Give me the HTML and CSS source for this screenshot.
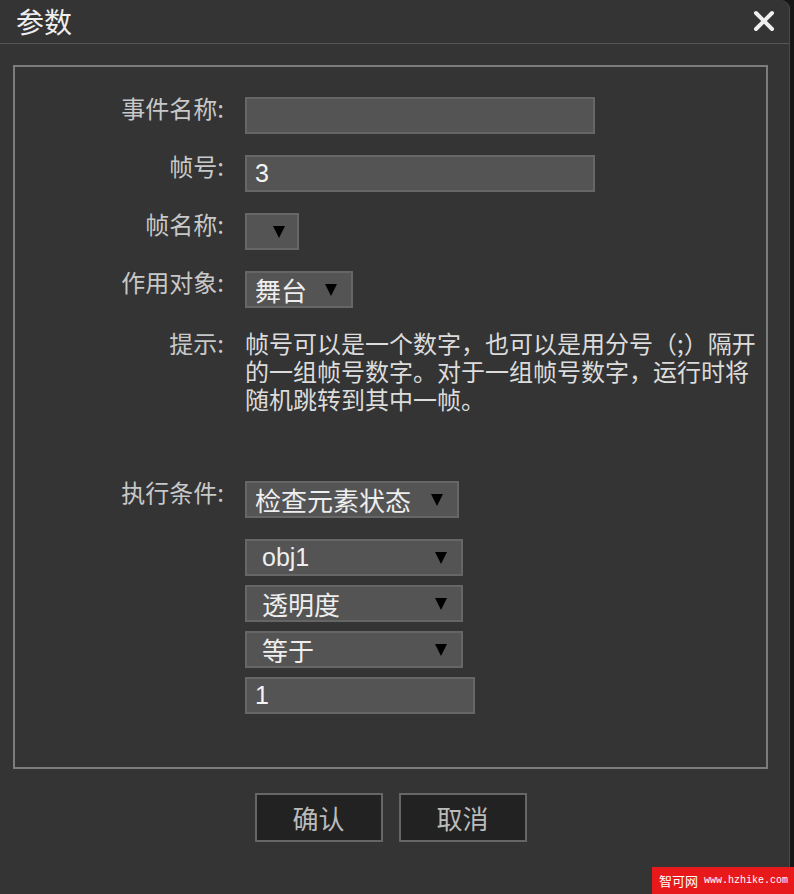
FILE: index.html
```html
<!DOCTYPE html>
<html lang="zh-CN">
<head>
    <meta charset="UTF-8">
    <meta name="viewport" content="width=device-width, initial-scale=1.0">
    <title>参数</title>
    <link rel="stylesheet" href="styles.css">
</head>
<body>
    <div class="dialog">
        <div class="dialog-header">
            <span class="dialog-title">参数</span>
            <span class="dialog-close">
                <svg width="24" height="24" viewBox="0 0 24 24">
                    <path d="M4 4L20 20M20 4L4 20" stroke="#eee" stroke-width="4" stroke-linecap="round"/>
                </svg>
            </span>
        </div>

        <div class="panel">
            <div class="form-row">
                <label class="form-label">事件名称:</label>
                <div class="box text-input wide"></div>
            </div>

            <div class="form-row">
                <label class="form-label">帧号:</label>
                <div class="box text-input wide">3</div>
            </div>

            <div class="form-row">
                <label class="form-label">帧名称:</label>
                <div class="box select select-empty"><span class="arrow"></span></div>
            </div>

            <div class="form-row">
                <label class="form-label">作用对象:</label>
                <div class="box select select-target"><span class="select-text">舞台</span><span class="arrow"></span></div>
            </div>

            <div class="form-row">
                <label class="form-label tip-label">提示:</label>
                <p class="tip">帧号可以是一个数字，也可以是用分号（;）隔开的一组帧号数字。对于一组帧号数字，运行时将随机跳转到其中一帧。</p>
            </div>

            <div class="form-row condition-row">
                <label class="form-label">执行条件:</label>
                <div class="box select select-condition"><span class="select-text">检查元素状态</span><span class="arrow"></span></div>
            </div>

            <div class="form-row">
                <span class="form-label"></span>
                <div class="condition-stack">
                    <div class="box select select-sub"><span class="select-text latin">obj1</span><span class="arrow"></span></div>
                    <div class="box select select-sub"><span class="select-text">透明度</span><span class="arrow"></span></div>
                    <div class="box select select-sub"><span class="select-text">等于</span><span class="arrow"></span></div>
                    <div class="box text-input value-input">1</div>
                </div>
            </div>
        </div>

        <div class="dialog-buttons">
            <button class="btn">确认</button>
            <button class="btn">取消</button>
        </div>
    </div>

    <div class="watermark">
        <span class="watermark-name">智可网</span>
        <span class="watermark-url">www.hzhike.com</span>
    </div>
</body>
</html>
```

FILE: styles.css
```css
* {
    margin: 0;
    padding: 0;
    box-sizing: border-box;
}

body {
    font-family: "Noto Sans CJK SC", "Liberation Sans", sans-serif;
    background: #161616;
    width: 794px;
    height: 894px;
    overflow: hidden;
    position: relative;
}

.dialog {
    width: 790px;
    height: 894px;
    background: #343434;
    border-top-right-radius: 9px;
    border-right: 1px solid #4a4a4a;
}

.dialog-header {
    height: 44px;
    border-bottom: 1px solid #555;
    display: flex;
    align-items: center;
    justify-content: space-between;
    padding: 0 13px 0 16px;
}

.dialog-title {
    font-size: 28px;
    line-height: 43px;
    color: #eee;
}

.dialog-close {
    display: flex;
    width: 24px;
    height: 24px;
    margin-top: -2px;
}

.panel {
    margin: 21px 21px 0 13px;
    height: 704px;
    border: 2px solid #7c7c7c;
    padding-top: 30px;
    display: flex;
    flex-direction: column;
    gap: 21px;
}

.form-row {
    display: flex;
    align-items: flex-start;
    gap: 21px;
}

.form-label {
    flex: 0 0 209px;
    text-align: right;
    font-size: 24px;
    line-height: 22px;
    color: #c8c8c8;
}

.tip-label {
    line-height: 28px;
}

.tip {
    width: 522px;
    font-size: 24px;
    line-height: 28px;
    color: #dcdcdc;
}

.condition-row {
    margin-top: 47px;
}

.condition-stack {
    display: flex;
    flex-direction: column;
    gap: 9px;
}

.box {
    height: 37px;
    border: 2px solid #666;
    background: #545454;
    display: flex;
    align-items: center;
}

.text-input {
    padding: 0 8px;
    font-family: "Liberation Sans", Arial, sans-serif;
    font-size: 25px;
    color: #f4f4f4;
}

.wide {
    width: 350px;
}

.value-input {
    width: 230px;
}

.select {
    padding: 0 14px 0 8px;
    color: #eee;
}

.select-text {
    font-size: 26px;
    line-height: 1;
}

.select-text.latin {
    font-family: "Liberation Sans", Arial, sans-serif;
    font-size: 25px;
}

.arrow {
    width: 0;
    height: 0;
    border-left: 6px solid transparent;
    border-right: 6px solid transparent;
    border-top: 12px solid #000;
    margin-left: auto;
    flex-shrink: 0;
}

.select-empty {
    width: 54px;
    padding-right: 12px;
}

.select-target {
    width: 108px;
}

.select-condition {
    width: 214px;
}

.select-sub {
    width: 218px;
    padding-left: 15px;
}

.dialog-buttons {
    display: flex;
    justify-content: center;
    gap: 16px;
    margin-top: 24px;
    padding: 0 21px 0 13px;
}

.btn {
    width: 128px;
    height: 49px;
    background: #222;
    border: 2px solid #666;
    color: #bbb;
    font-family: "Noto Sans CJK SC", sans-serif;
    font-size: 26px;
    cursor: pointer;
}

.watermark {
    position: absolute;
    right: 0;
    bottom: 0;
    width: 142px;
    height: 27px;
    background: #e8191a;
    color: #fff;
    display: flex;
    align-items: center;
    gap: 6px;
    padding-left: 7px;
    white-space: nowrap;
}

.watermark-name {
    font-size: 13px;
}

.watermark-url {
    font-family: "Liberation Mono", monospace;
    font-size: 10px;
}
```
